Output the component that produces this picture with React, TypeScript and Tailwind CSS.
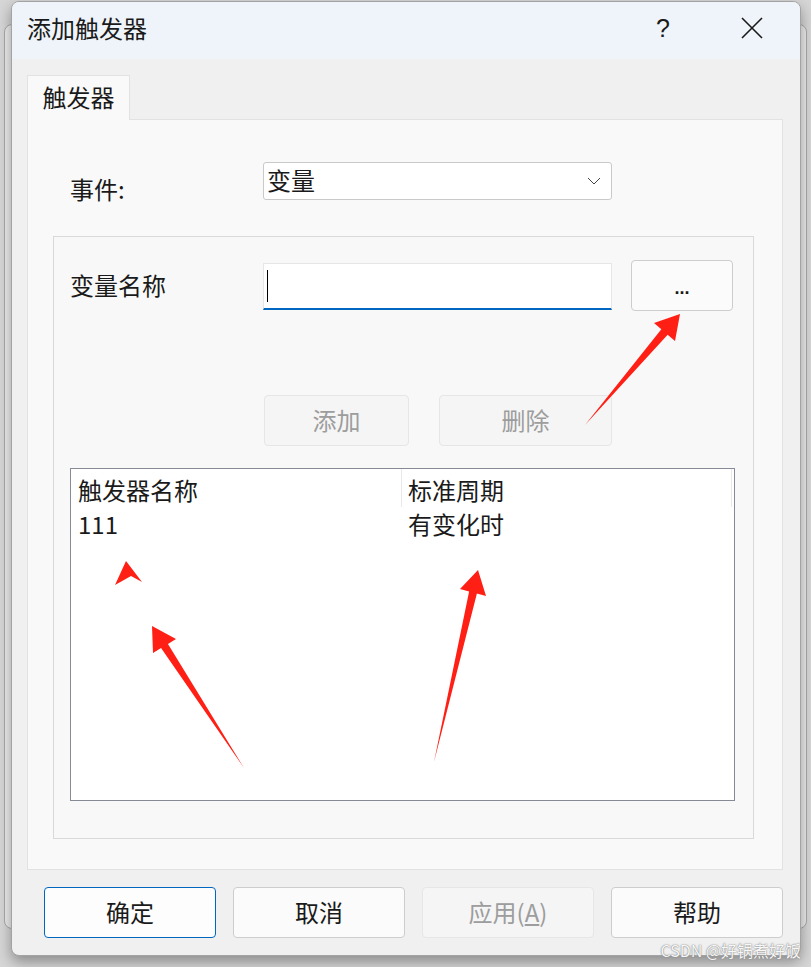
import React from "react";

const cjk = { fontFamily: '"Microsoft YaHei UI", "Noto Sans CJK SC", "Noto Sans", sans-serif' };

type P = [number, number];

const arrows: { tail: P; tip: P; w1: P; w2: P }[] = [
  { tail: [585, 425], tip: [680, 314], w1: [654, 323], w2: [675, 341] },
  { tail: [244, 768], tip: [152, 626], w1: [176, 639], w2: [153, 653] },
  { tail: [434, 762], tip: [478, 570], w1: [460, 589], w2: [486, 596] },
];

function arrowPoints(a: { tail: P; tip: P; w1: P; w2: P }) {
  const m: P = [(a.w1[0] + a.w2[0]) / 2, (a.w1[1] + a.w2[1]) / 2];
  const i1: P = [m[0] + (a.w1[0] - m[0]) * 0.3, m[1] + (a.w1[1] - m[1]) * 0.3];
  const i2: P = [m[0] + (a.w2[0] - m[0]) * 0.3, m[1] + (a.w2[1] - m[1]) * 0.3];
  return [a.tail, i1, a.w1, a.tip, a.w2, i2].map((p) => p.join(",")).join(" ");
}

function Btn({
  children,
  className = "",
  disabled = false,
  primary = false,
}: {
  children: React.ReactNode;
  className?: string;
  disabled?: boolean;
  primary?: boolean;
}) {
  return (
    <div
      className={
        "flex items-center justify-center rounded-[4px] border pb-[2px] text-[24px] leading-none " +
        (disabled
          ? "border-[#e6e6e6] bg-[#f5f5f5] text-[#9d9d9d] "
          : primary
          ? "border-[#0067c0] bg-[#fdfdfd] text-[#1a1a1a] "
          : "border-[#cdcdcd] bg-[#fbfbfb] text-[#1a1a1a] ") +
        className
      }
    >
      {children}
    </div>
  );
}

export default function App() {
  return (
    <div className="relative h-[967px] w-[811px] overflow-hidden bg-[#d6d6d6] pl-[11px] pt-[1px]" style={cjk}>
      {/* window behind */}
      <div className="absolute left-[4px] top-[24px] h-[905px] w-[803px] rounded-[8px] border border-[#a9a9a9] bg-[#ececec]" />

      <div className="relative z-10 flex h-[955px] w-[790px] flex-col overflow-hidden rounded-[8px] border border-[#a3a3a3] bg-[#f0f0f0] shadow-[0_6px_14px_rgba(0,0,0,0.35)]">
        {/* title bar */}
        <div className="flex h-[57px] shrink-0 items-center bg-[#eef4f9] pb-[5px] pl-[15px] text-[24px] text-[#1a1a1a]">
          <span className="leading-none">添加触发器</span>
          <span className="ml-auto mr-[71px] font-['Liberation_Sans'] text-[25px] leading-none">?</span>
          <svg width="22" height="22" viewBox="0 0 22 22" className="mr-[37px]">
            <path d="M1 1 L21 21 M21 1 L1 21" stroke="#1a1a1a" strokeWidth="1.6" />
          </svg>
        </div>

        {/* body */}
        <div className="flex flex-1 flex-col px-[15px] pt-[16px]">
          <div className="relative z-10 -mb-px flex h-[45px] w-[103px] items-center justify-center border border-b-0 border-[#e2e2e2] bg-[#f9f9f9] pb-[2px] text-[24px] leading-none text-[#1a1a1a]">
            触发器
          </div>
          <div className="flex h-[751px] w-[756px] flex-col border border-[#e2e2e2] bg-[#f9f9f9]">
            {/* event row */}
            <div className="flex pl-[42px] pt-[42px]">
              <div className="mt-[15px] w-[193px] text-[24px] leading-none text-[#1a1a1a]">事件:</div>
              <div className="flex h-[38px] w-[349px] items-center rounded-[3px] border border-[#c9c9c9] bg-white pb-[2px] pl-[3px] pr-[10px] text-[24px] leading-none text-[#1a1a1a]">
                <span>变量</span>
                <svg width="14" height="8" viewBox="0 0 14 8" className="ml-auto mt-[2px]">
                  <path d="M1 1 L7 7 L13 1" fill="none" stroke="#444" strokeWidth="1" />
                </svg>
              </div>
            </div>

            {/* group box */}
            <div className="ml-[25px] mt-[35px] flex h-[603px] w-[701px] flex-col border border-[#d9d9d9] bg-[#f8f8f8]">
              <div className="flex items-start pl-[16px] pt-[23px]">
                <div className="mt-[13px] w-[193px] text-[24px] leading-none text-[#1a1a1a]">变量名称</div>
                <div className="mt-[3px] flex h-[47px] w-[349px] items-center border border-b-2 border-[#e6e6e6] border-b-[#0067c0] bg-white pl-[3px]">
                  <div className="h-[32px] w-px bg-black" />
                </div>
                <Btn className="ml-[19px] h-[51px] w-[102px] pt-[6px] font-['Liberation_Sans'] !text-[18px] font-bold">
                  ...
                </Btn>
              </div>

              <div className="mt-[84px] flex pl-[210px]">
                <Btn disabled className="h-[51px] w-[145px]">添加</Btn>
                <Btn disabled className="ml-[30px] h-[51px] w-[173px]">删除</Btn>
              </div>

              <div className="ml-[16px] mt-[22px] h-[333px] w-[665px] border border-[#858a96] bg-white text-[24px] leading-none text-[#1a1a1a]">
                <div className="flex h-[38px] items-center">
                  <div className="flex h-full w-[330px] items-center pl-[7px] pt-[3px]">触发器名称</div>
                  <div className="flex h-full w-[331px] items-center border-l border-r border-[#e8e8e8] pl-[6px] pt-[3px]">标准周期</div>
                </div>
                <div className="flex h-[34px] items-center">
                  <div className="w-[330px] pl-[7px]">111</div>
                  <div className="pl-[7px]">有变化时</div>
                </div>
              </div>
            </div>
          </div>

          {/* bottom buttons */}
          <div className="mt-[17px] flex gap-[17px] pl-[17px]">
            <Btn primary className="h-[51px] w-[172px]">确定</Btn>
            <Btn className="h-[51px] w-[172px]">取消</Btn>
            <Btn disabled className="h-[51px] w-[172px]">
              应用(<span className="underline underline-offset-2">A</span>)
            </Btn>
            <Btn className="h-[51px] w-[172px]">帮助</Btn>
          </div>
        </div>
      </div>

      {/* annotations */}
      <svg className="pointer-events-none absolute left-0 top-0 z-20" width="811" height="967" viewBox="0 0 811 967">
        {arrows.map((a, i) => (
          <polygon key={i} points={arrowPoints(a)} fill="#ff1f14" />
        ))}
        <polygon points="126,561 142,582 131,576 115,585" fill="#ff1f14" />
      </svg>

      <div className="absolute bottom-[9px] right-[10px] z-20 text-[16px] leading-none text-[#f7f7f7] [text-shadow:0_0_1px_#777,0_0_2px_#999]">
        CSDN @好锅煮好饭
      </div>
    </div>
  );
}
